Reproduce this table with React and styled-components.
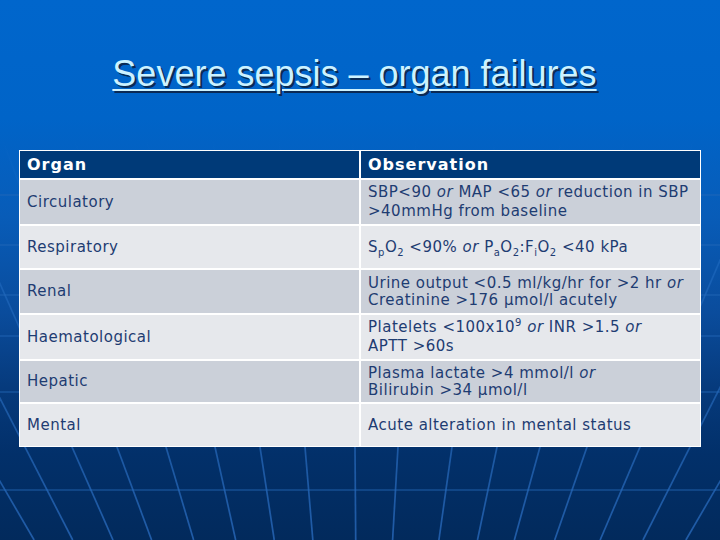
import React from 'react';
import styled, { createGlobalStyle } from 'styled-components';

const GlobalStyle = createGlobalStyle`
  html, body {
    margin: 0;
    padding: 0;
  }
  body {
    width: 720px;
    height: 540px;
    overflow: hidden;
  }
`;

const rows = [
  {
    organ: 'Circulatory',
    h: 46,
    lh: 19,
    obs: (
      <>
        SBP&lt;90 <i>or</i> MAP &lt;65 <i>or</i> reduction in SBP
        <br />
        &gt;40mmHg from baseline
      </>
    ),
  },
  {
    organ: 'Respiratory',
    h: 44,
    lh: 19,
    obs: (
      <>
        S<sub>p</sub>O<sub>2</sub> &lt;90% <i>or</i> P<sub>a</sub>O<sub>2</sub>:F<sub>i</sub>O
        <sub>2</sub> &lt;40 kPa
      </>
    ),
  },
  {
    organ: 'Renal',
    h: 45,
    lh: 17,
    obs: (
      <>
        Urine output &lt;0.5 ml/kg/hr for &gt;2 hr <i>or</i>
        <br />
        Creatinine &gt;176 µmol/l acutely
      </>
    ),
  },
  {
    organ: 'Haematological',
    h: 46,
    lh: 19,
    obs: (
      <>
        Platelets &lt;100x10<sup>9</sup> <i>or</i> INR &gt;1.5 <i>or</i>
        <br />
        APTT &gt;60s
      </>
    ),
  },
  {
    organ: 'Hepatic',
    h: 43,
    lh: 17,
    obs: (
      <>
        Plasma lactate &gt;4 mmol/l <i>or</i>
        <br />
        Bilirubin &gt;34 µmol/l
      </>
    ),
  },
  {
    organ: 'Mental',
    h: 44,
    lh: 19,
    obs: <>Acute alteration in mental status</>,
  },
];

// where the fan lines of the backdrop cross y=447
const fanX = [-20, 25, 72, 117, 166, 215, 260, 305, 355, 398, 452, 497, 540, 587, 640, 690, 740];

const App = () => {
  return (
    <Slide>
      <GlobalStyle />
      <Backdrop viewBox="0 0 720 540" preserveAspectRatio="none">
        <defs>
          <linearGradient id="fade" x1="0" y1="0" x2="0" y2="1">
            <stop offset="0" stopColor="#2f7ad0" stopOpacity="0" />
            <stop offset="0.3" stopColor="#2f7ad0" stopOpacity="0.35" />
            <stop offset="1" stopColor="#2a6cc0" stopOpacity="0.75" />
          </linearGradient>
        </defs>
        <g stroke="url(#fade)" strokeWidth="1.7" fill="none">
          {fanX.map((x) => {
            const vx = 360;
            const vy = 1100;
            const t0 = (140 - 447) / (vy - 447);
            const t1 = (540 - 447) / (vy - 447);
            return (
              <line
                key={x}
                x1={x + (vx - x) * t0}
                y1="140"
                x2={x + (vx - x) * t1}
                y2="540"
              />
            );
          })}
        </g>
        <g stroke="#2468b8" strokeWidth="1.6" opacity="0.55">
          {[195, 245, 295, 336, 392, 490].map((y) => (
            <line key={y} x1="0" y1={y} x2="720" y2={y} />
          ))}
        </g>
      </Backdrop>
      <Title>Severe sepsis – organ failures</Title>
      <Table>
        <HeadCell>Organ</HeadCell>
        <HeadCell>Observation</HeadCell>
        {rows.map((r, i) => (
          <React.Fragment key={r.organ}>
            <Cell $alt={i % 2 === 1} $h={r.h} $lh={19}>
              {r.organ}
            </Cell>
            <Cell $alt={i % 2 === 1} $h={r.h} $lh={r.lh}>
              <span>{r.obs}</span>
            </Cell>
          </React.Fragment>
        ))}
      </Table>
    </Slide>
  );
};

const Slide = styled.div`
  position: relative;
  width: 720px;
  height: 540px;
  overflow: hidden;
  background: linear-gradient(
    180deg,
    #0066cc 0%,
    #0064c8 22%,
    #085cb8 40%,
    #0a4c9c 58%,
    #063a7c 72%,
    #02306a 84%,
    #022a5c 100%
  );
  display: flex;
  flex-direction: column;
  align-items: center;
`;

const Backdrop = styled.svg`
  position: absolute;
  inset: 0;
  width: 720px;
  height: 540px;
  pointer-events: none;
`;

const Title = styled.h1`
  position: relative;
  margin: 50px 11px 0 0;
  height: 100px;
  font-family: 'Liberation Sans', Arial, sans-serif;
  font-weight: normal;
  font-size: 36px;
  line-height: 48px;
  color: #ccf2ff;
  text-decoration: underline;
  text-decoration-thickness: 2px;
  text-underline-offset: 3px;
  text-shadow: 2px 2px 0 #0a2a55;
  letter-spacing: 0;
`;

const Table = styled.div`
  position: relative;
  width: 682px;
  display: grid;
  grid-template-columns: 339px 339px;
  gap: 2px;
  padding: 1px;
  box-sizing: border-box;
  background: #ffffff;
  font-family: 'DejaVu Sans', Verdana, sans-serif;
  font-size: 15px;
  letter-spacing: 0.5px;
`;

const HeadCell = styled.div`
  height: 27px;
  background: #003a78;
  color: #ffffff;
  font-weight: bold;
  font-size: 16px;
  letter-spacing: 1px;
  display: flex;
  align-items: center;
  padding: 0 7px;
`;

const Cell = styled.div`
  height: ${(p) => p.$h - 2}px;
  background: ${(p) => (p.$alt ? '#e6e8ec' : '#cbd0d9')};
  color: #1e3c72;
  display: flex;
  align-items: center;
  padding: 0 7px;
  line-height: ${(p) => p.$lh}px;
  white-space: nowrap;

  i {
    font-style: italic;
  }
  sub,
  sup {
    font-size: 10px;
    line-height: 0;
  }
`;

export default App;
